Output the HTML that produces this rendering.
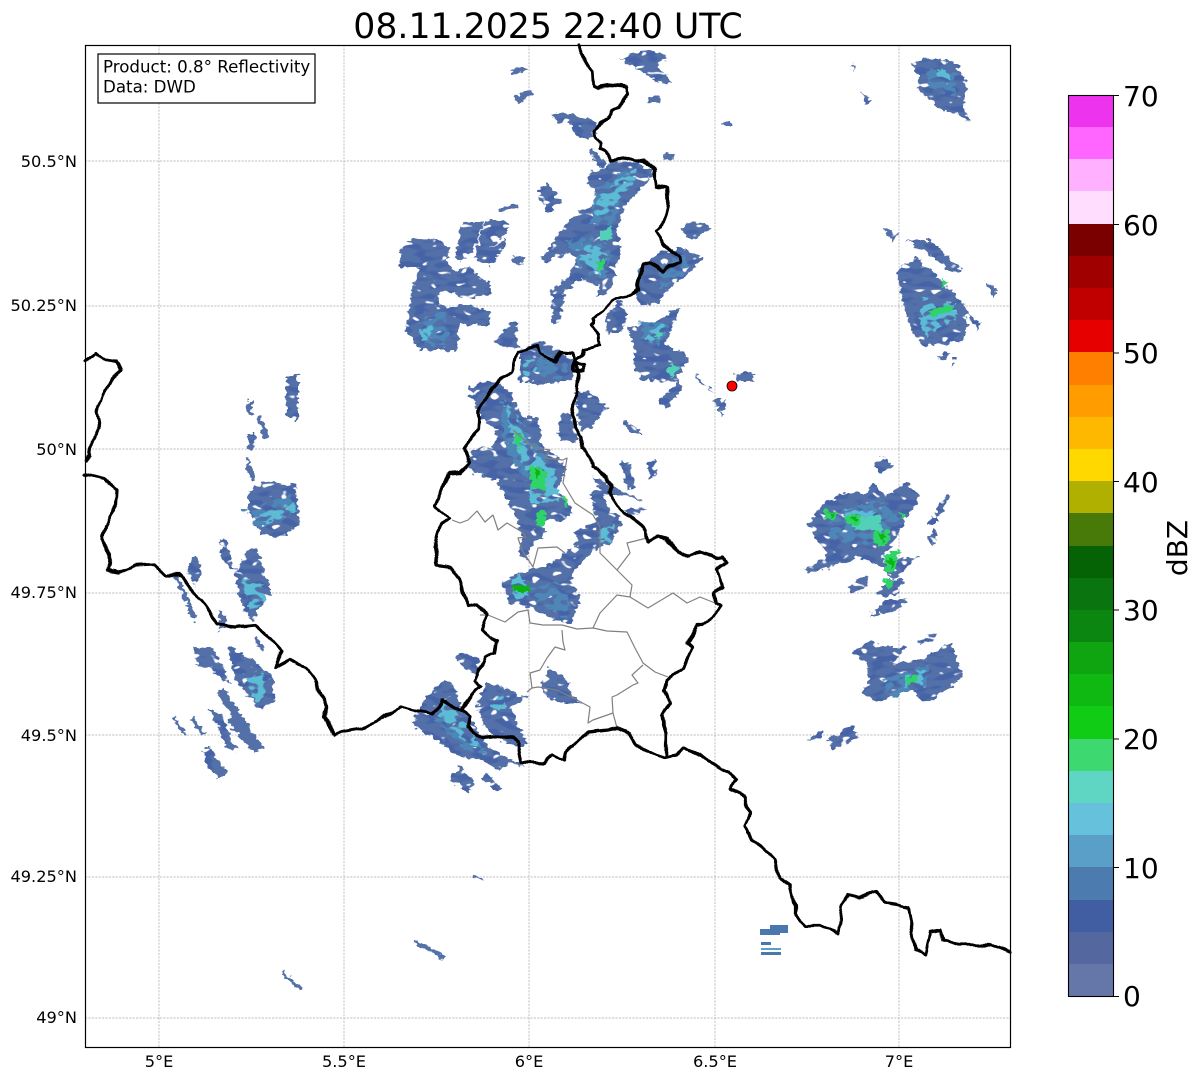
<!DOCTYPE html>
<html><head><meta charset="utf-8"><style>
html,body{margin:0;padding:0;background:#fff;width:1202px;height:1081px;overflow:hidden}
svg{display:block}
text{font-family:"DejaVu Sans","Liberation Sans",sans-serif;fill:#000}
.g{stroke:#aaa;stroke-width:.7;stroke-dasharray:2.2 1.2;fill:none}
.tk{font-size:16.2px}
.cb{font-size:28px}
.b{fill:#5470a8}.m{fill:#4e86b8}.c{fill:#5cbcd6}.t{fill:#52d0b8}.l{fill:#2ed468}.d{fill:#0cb410}
.s{fill:none;stroke:#5370a8}
</style></head><body>
<svg width="1202" height="1081" viewBox="0 0 1202 1081" xmlns="http://www.w3.org/2000/svg">
<defs>
<filter id="j" x="0" y="0" width="1202" height="1081" filterUnits="userSpaceOnUse" color-interpolation-filters="sRGB">
<feTurbulence type="fractalNoise" baseFrequency="0.14 0.22" numOctaves="2" seed="7" result="n"/>
<feDisplacementMap in="SourceGraphic" in2="n" scale="9" xChannelSelector="R" yChannelSelector="G" result="s"/>
<feTurbulence type="fractalNoise" baseFrequency="0.1 0.17" numOctaves="1" seed="21" result="h"/>
<feColorMatrix in="h" type="matrix" values="0 0 0 0 0 0 0 0 0 0 0 0 0 0 0 16 0 0 0 -4.6" result="hm"/>
<feComposite in="s" in2="hm" operator="in" result="p"/>
<feTurbulence type="fractalNoise" baseFrequency="0.07 0.16" numOctaves="1" seed="3" result="v"/>
<feColorMatrix in="v" type="matrix" values="0 0 0 0 .27 0 0 0 0 .39 0 0 0 0 .65 0 10 0 0 -5" result="vm"/>
<feComposite in="vm" in2="p" operator="in" result="dk"/>
<feMerge><feMergeNode in="p"/><feMergeNode in="dk"/></feMerge>
</filter>
<filter id="i" x="0" y="0" width="1202" height="1081" filterUnits="userSpaceOnUse" color-interpolation-filters="sRGB">
<feTurbulence type="fractalNoise" baseFrequency="0.14 0.22" numOctaves="2" seed="7" result="n"/>
<feDisplacementMap in="SourceGraphic" in2="n" scale="9" xChannelSelector="R" yChannelSelector="G" result="s"/>
<feTurbulence type="fractalNoise" baseFrequency="0.11 0.18" numOctaves="1" seed="11" result="h"/>
<feColorMatrix in="h" type="matrix" values="0 0 0 0 0 0 0 0 0 0 0 0 0 0 0 12 0 0 0 -5" result="hm"/>
<feComposite in="s" in2="hm" operator="in"/>
</filter>
<filter id="f" x="0" y="0" width="1202" height="1081" filterUnits="userSpaceOnUse" color-interpolation-filters="sRGB">
<feTurbulence type="fractalNoise" baseFrequency="0.14 0.22" numOctaves="2" seed="7" result="n"/>
<feDisplacementMap in="SourceGraphic" in2="n" scale="9" xChannelSelector="R" yChannelSelector="G"/>
</filter>
<filter id="w" x="0" y="0" width="1202" height="1081" filterUnits="userSpaceOnUse" color-interpolation-filters="sRGB">
<feTurbulence type="fractalNoise" baseFrequency="0.07" numOctaves="1" seed="5" result="n"/>
<feDisplacementMap in="SourceGraphic" in2="n" scale="8" xChannelSelector="R" yChannelSelector="G"/>
</filter>
</defs>
<rect width="1202" height="1081" fill="#fff"/>
<text x="548" y="38" font-size="34.7" text-anchor="middle">08.11.2025 22:40 UTC</text>

<!-- grid -->
<g class="g">
<path d="M159 45V1047M344 45V1047M529 45V1047M715 45V1047M899 45V1047"/>
<path d="M85 161H1010M85 306H1010M85 449H1010M85 593H1010M85 735H1010M85 877H1010M85 1018H1010"/>
</g>

<!-- radar -->
<g filter="url(#j)">
<g class="b">
<path d="M620 60L637 52L655 50L667 57L657 65L672 83L657 82L640 70Z"/>
<path d="M550 115L563 112L597 122L593 138L577 137L573 125L557 122Z"/>
<path d="M590 147L607 163L600 168L590 155Z"/>
<path d="M590 173L613 163L633 160L653 173L640 190L625 205L618 225L620 255L610 290L595 298L600 285L580 280L565 290L560 320L552 325L552 300L550 290L565 280L575 265L570 252L545 262L540 260L555 240L565 225L575 215L595 205L595 190L588 185Z"/>
<path d="M640 267L660 253L680 247L702 257L690 273L667 290L657 303L640 307L635 290Z"/>
<path d="M680 230L693 220L712 228L693 240Z"/>
<path d="M605 317L620 300L627 317L620 333L607 333Z"/>
<path d="M627 327L653 323L680 307L673 327L663 347L633 343Z"/>
<path d="M400 250L410 240L427 237L450 247L447 262L455 270L470 267L490 285L490 295L470 297L440 292L437 305L447 307L470 305L490 312L488 325L460 325L457 350L420 350L405 330L413 287L420 267L400 267Z"/>
<path d="M462 222L483 222L475 250L460 262L455 258Z"/>
<path d="M485 220L505 220L510 228L490 250L505 238L505 248L490 265L475 258Z"/>
<path d="M492 343L515 320L518 350Z"/>
<path d="M537 193L547 183L560 200L550 213Z"/>
<path d="M520 350L540 340L577 363L573 380L547 383L520 383Z"/>
<path d="M468 387L483 383L503 383L523 417L537 417L543 447L557 457L567 467L557 490L573 510L567 520L550 520L540 527L547 533L533 543L527 560L517 553L523 540L517 517L497 483L500 480L487 480L467 467L473 450L493 447L497 430L480 417Z"/>
<path d="M573 532L597 522L613 513L622 523L610 543L593 550L578 567L570 580L580 597L573 623L563 623L527 607L510 603L502 582L520 573L533 570L557 560L567 550L580 543Z"/>
<path d="M575 390L590 393L608 407L593 427L580 430Z"/>
<path d="M558 427L563 412L577 420L577 443L560 440Z"/>
<path d="M590 492L603 490L608 510L620 517L610 530L597 523Z"/>
<path d="M593 477L613 487L643 500L627 497L603 493Z"/>
<path d="M623 510L648 508L630 517Z"/>
<path d="M633 340L660 343L677 350L690 357L677 377L683 387L667 408L658 403L677 382L640 380L633 360Z"/>
<path d="M693 373L715 392L700 383Z"/>
<path d="M712 400L725 400L722 415Z"/>
<path d="M622 423L630 422L643 435L633 435Z"/>
<path d="M735 374L752 372L755 381L738 381Z"/>
<path d="M620 462L628 462L635 485L628 490Z"/>
<path d="M647 462L655 460L657 475L650 478Z"/>
<path d="M455 658L463 653L480 658L475 675L463 667Z"/>
<path d="M412 723L420 707L433 690L445 680L455 687L460 707L470 717L480 737L493 750L528 768L510 763L500 770L483 760L460 757Z"/>
<path d="M450 780L460 767L477 783L468 793Z"/>
<path d="M480 777L487 773L502 788L497 792Z"/>
<path d="M477 707L487 682L503 687L527 698L510 707L517 723L527 743L523 747L507 743L487 730Z"/>
<path d="M540 683L550 668L568 680L570 693L580 702L563 703L547 698Z"/>
<path d="M875 463L885 455L893 467L878 472Z"/>
<path d="M808 525L823 503L847 493L867 493L872 483L887 497L907 482L920 497L900 530L893 543L880 560L920 557L907 567L893 580L883 567L857 557L833 567L807 572L805 568L820 563L827 553L813 533Z"/>
<path d="M848 588L860 577L870 578L868 587L853 593Z"/>
<path d="M877 593L890 580L903 580L897 593L883 598Z"/>
<path d="M870 615L887 600L907 598L890 613Z"/>
<path d="M927 538L935 527L937 540L932 545Z"/>
<path d="M927 523L943 500L950 495L937 523Z"/>
<path d="M852 652L870 640L880 647L908 647L893 663L920 660L950 643L963 677L930 703L920 700L913 690L880 702L862 693L868 680L867 663Z"/>
<path d="M917 642L937 632L937 638L920 645Z"/>
<path d="M807 740L823 730L823 737Z"/>
<path d="M827 740L853 725L857 737L833 750Z"/>
<path d="M912 63L930 58L953 62L968 83L963 107L970 123L957 112L943 112L918 90L920 80Z"/>
<path d="M897 270L917 257L937 277L953 293L967 307L967 333L960 343L923 345L913 333L903 307Z"/>
<path d="M905 240L930 240L962 270L953 273L933 257Z"/>
<path d="M883 228L897 233L893 242Z"/>
<path d="M985 282L997 288L993 298Z"/>
<path d="M937 355L950 353L943 362Z"/>
<path d="M952 357L957 357L953 368Z"/>
<path d="M967 313L980 323L977 330Z"/>
<path d="M860 90L872 102L866 104Z"/>
<path d="M850 65L856 64L854 71Z"/>
<path d="M286 375L298 375L298 420L286 415Z"/>
<path d="M248 433L256 433L254 450L248 450Z"/>
<path d="M248 493L263 482L295 485L300 522L287 535L275 537L260 533L248 510Z"/>
<path d="M220 540L225 538L235 573L248 550L257 547L272 595L260 607L252 623L240 600L235 573L222 560Z"/>
<path d="M192 557L197 557L202 573L195 587L187 572Z"/>
<path d="M218 610L225 613L227 627L220 630Z"/>
<path d="M192 647L212 647L230 682L225 683L212 670L197 663Z"/>
<path d="M228 648L233 648L252 660L273 677L275 700L260 710L235 680Z"/>
<path d="M208 708L220 713L238 752L227 747Z"/>
<path d="M203 750L210 748L227 773L218 780L205 763Z"/>
</g>
</g>
<g filter="url(#f)">
<g class="s">
<path stroke-width="5" d="M512 73L525 68"/>
<path stroke-width="7" d="M516 100L532 92"/>
<path stroke-width="4" d="M250 400V415M248 460L253 482M255 637L263 650"/>
<path stroke-width="5" d="M260 417L266 438"/>
<path stroke-width="4" d="M175 573L195 620M193 718L203 735"/>
<path stroke-width="8" d="M220 690L260 750"/>
<path stroke-width="12" d="M232 718L258 750"/>
<path stroke-width="3" d="M173 717L185 735"/>
<path stroke-width="4" d="M414 941L445 958M281 973L301 988"/>
<path stroke-width="2" d="M474 876L482 880"/>
<path stroke-width="5" d="M723 123L731 123"/>
<path stroke-width="6" d="M648 99L660 100"/>
<path stroke-width="6" d="M664 156L674 157"/>
<path stroke-width="5" d="M500 210L518 205"/>
<path stroke-width="6" d="M514 261L525 259"/>
<path stroke-width="4" d="M890 612L905 600"/>
</g>
</g>
<g filter="url(#i)">
<g class="m">
<path d="M595 190L625 170L642 172L625 195L612 225L590 225Z"/>
<path d="M565 240L590 235L612 250L605 285L580 270Z"/>
<path d="M420 320L445 310L450 345L425 345Z"/>
<path d="M500 400L520 420L550 460L560 500L540 500L505 450Z"/>
<path d="M530 590L555 580L570 600L565 618L540 605Z"/>
<path d="M240 510L290 495L292 515L260 528Z"/>
<path d="M430 715L460 725L490 755L465 750Z"/>
<path d="M830 515L880 500L900 520L870 545L830 540Z"/>
<path d="M880 680L930 665L925 685L890 698Z"/>
<path d="M540 350L570 365L560 380L535 375Z"/>
<path d="M925 70L955 72L955 95L930 90Z"/>
<path d="M660 265L685 255L690 270L660 290Z"/>
<path d="M640 320L670 325L660 345L640 342Z"/>
</g>
<g class="c">
<path d="M600 195L618 180L635 170L640 175L620 195L610 215L595 215Z"/>
<path d="M575 250L595 245L608 255L600 275L585 265Z"/>
<path d="M505 400L515 410L525 440L535 450L540 470L525 470L510 430Z"/>
<path d="M530 450L555 470L560 500L530 505Z"/>
<path d="M510 580L520 575L530 595L515 600Z"/>
<path d="M600 530L615 525L612 540L600 542Z"/>
<path d="M523 362L535 360L537 375L525 377Z"/>
<path d="M252 517L293 502L297 510L270 523Z"/>
<path d="M240 575L262 585L268 600L250 610Z"/>
<path d="M244 675L262 668L268 695L255 702Z"/>
<path d="M442 700L460 715L480 745L468 745L440 715Z"/>
<path d="M845 510L875 512L868 525L850 525Z"/>
<path d="M938 70L950 70L950 83L940 80Z"/>
<path d="M923 293L937 307L957 303L957 317L927 337L920 323Z"/>
<path d="M905 675L925 670L920 685L905 688Z"/>
<path d="M650 330L665 325L660 340L645 342Z"/>
<path d="M420 330L432 325L430 340L422 340Z"/>
<path d="M490 700L505 695L505 710L495 712Z"/>
</g>
</g>
<g filter="url(#f)">
<g class="t">
<path d="M672 362L680 366L672 378L668 372Z"/>
<path d="M600 230L612 225L610 240L600 240Z"/>
<path d="M655 335L665 332L660 340Z"/>
<path d="M884 555L898 552L895 570L885 570Z"/>
<path d="M850 520L880 515L880 530L855 530Z"/>
</g>
<g class="l">
<path d="M516 430L522 437L520 450L515 442Z"/>
<path d="M530 465L548 470L545 490L530 488Z"/>
<path d="M537 515L545 510L545 525L537 527Z"/>
<path d="M562 495L570 500L565 508Z"/>
<path d="M597 262L605 258L600 272Z"/>
<path d="M928 310L955 305L953 310L933 317Z"/>
<path d="M825 510L838 512L835 520L825 518Z"/>
<path d="M846 515L862 515L860 525L846 525Z"/>
<path d="M875 530L890 530L888 545L873 545Z"/>
<path d="M885 555L900 550L895 572L885 572Z"/>
<path d="M882 580L895 582L890 590Z"/>
<path d="M905 677L918 675L918 683L908 685Z"/>
<path d="M898 512L905 513L902 522Z"/>
<path d="M942 278L948 283L943 287Z"/>
</g>
<g class="d">
<path d="M512 585L530 585L530 592L514 592Z"/>
<path d="M828 512L835 512L833 518Z"/>
<path d="M848 518L858 518L856 523Z"/>
<path d="M878 532L886 532L884 542Z"/>
<path d="M888 560L896 558L892 570Z"/>
<path d="M535 470L540 470L538 482Z"/>
</g>
</g>
<!-- bottom rect stripes -->
<g fill="#4a78ae">
<rect x="760" y="929" width="20" height="6"/><rect x="770" y="925" width="18" height="8"/>
<rect x="761" y="942" width="10" height="3"/><rect x="761" y="948" width="20" height="2" fill="#5a9fc8"/><rect x="761" y="952" width="20" height="3"/>
</g>

<!-- grey borders -->
<g fill="none" stroke="#808080" stroke-width="1.2" stroke-linejoin="round">
<path d="M452 520L460 523L468 520L477 511L485 522L493 515L498 530L507 523L522 532L526 537L518 538L522 550L533 567L538 548L557 547L565 553"/>
<path d="M513 430L533 447L550 450L545 458L563 460L567 458L563 483L575 503L593 515L600 527L600 553L617 570L630 553L627 543L647 538L647 543"/>
<path d="M617 570L632 585L630 597L617 595L600 613L593 628"/>
<path d="M630 597L648 608L673 593L687 603L700 597L715 603"/>
<path d="M480 615L488 615L505 622L518 612L528 610L530 623L543 625L562 625L577 629L593 628L607 631L627 632L635 648L643 663L655 672L668 677"/>
<path d="M562 630L563 642L565 650L555 647L547 658L540 670L530 673L532 688L527 692M532 688L538 687L557 690L577 700L590 707L588 723L593 720L613 713L617 728"/>
<path d="M613 713L612 697L617 695L633 685L638 683L632 675L643 665"/>
</g>

<!-- black borders -->
<g filter="url(#w)">
<g fill="none" stroke="#000" stroke-width="3.2" stroke-linejoin="round" stroke-linecap="round">
<path d="M578 45L585 60L592 72L593 85L597 87L610 85L627 87L629 93L624 100L620 108L613 110L608 118L600 125L595 130L597 138L601 143L600 147L606 150L611 161L620 160L632 158L643 160L652 167L655 170L655 180L656 186L667 188L668 200L665 215L660 228L656 232L665 245L678 256L680 262L670 266L663 272L652 264L645 265L640 275L637 290L630 295L612 300L605 310L593 318L594 322L591 325L598 335L599 345L592 348L582 350L583 355L577 360L573 370L583 370L586 365L578 363L577 383L575 400L572 415L577 427L583 437L582 447L590 457L592 468L598 470L607 477L612 485L610 493L615 503L627 515L637 522L647 530L648 542L657 535L665 537L677 550L688 557L702 552L717 558L722 557L725 562L717 570L720 580L722 587L715 593L715 605L720 608L715 615L702 625L697 625L687 643L692 648L683 668L668 680L665 690L670 703L662 717L666 733L666 757L677 755L685 748L700 755L713 763L728 772L735 780L730 790L745 797L750 812L745 825L752 840L770 853L775 860L778 878L790 885L795 905L795 915L805 925L820 925L838 932L842 905L848 895L860 898L875 892L885 903L897 905L908 908L912 930L915 950L925 955L930 932L940 930L943 940L960 945L975 945L990 945L1003 950L1010 953"/>
<path d="M85 475L105 480L117 490L116 505L105 525L103 540L110 555L107 570L120 572L135 566L155 565L165 575L180 575L192 590L205 605L218 625L235 627L255 625L270 637L282 650L275 668L290 660L305 668L315 680L320 695L328 705L325 717L333 735L345 731L362 728L375 722L390 712L400 706L415 710L432 713L442 700L460 710L470 717L468 727L483 737L497 735L515 737L518 743L522 762L543 763L552 755L565 762L567 752L577 742L588 732L607 730L618 728L630 733L637 745L663 757L666 757"/>
<path d="M460 710L473 695L482 687L475 680L485 657L495 653L497 640L482 630L488 615L478 605L468 607L460 580L450 567L438 565L435 547L440 525L450 520L435 505L448 473L460 472L470 462L465 447L477 430L478 412L493 387L512 372L517 352L538 345L540 353L555 360L560 352L573 353L578 363"/>
<path d="M85 362L95 353L105 360L116 362L121 370L112 378L105 392L102 400L96 412L99 428L92 440L90 455L85 460"/>
</g>
</g>

<circle cx="732" cy="386" r="5" fill="#f00" stroke="#000" stroke-width=".8"/>

<!-- annotation -->
<rect x="98" y="54" width="217" height="49" fill="#fff" stroke="#000" stroke-width="1.2"/>
<text x="103" y="72.5" font-size="16.67">Product: 0.8° Reflectivity</text>
<text x="103" y="92.5" font-size="16.67">Data: DWD</text>

<!-- axes -->
<rect x="85.5" y="45.5" width="925" height="1002" fill="none" stroke="#000" stroke-width="1.2"/>

<!-- labels -->
<g class="tk" text-anchor="end">
<text x="77" y="167">50.5°N</text>
<text x="77" y="311">50.25°N</text>
<text x="77" y="455">50°N</text>
<text x="77" y="598">49.75°N</text>
<text x="77" y="741">49.5°N</text>
<text x="77" y="882">49.25°N</text>
<text x="77" y="1023">49°N</text>
</g>
<g class="tk" text-anchor="middle">
<text x="159" y="1067">5°E</text>
<text x="344" y="1067">5.5°E</text>
<text x="529" y="1067">6°E</text>
<text x="715" y="1067">6.5°E</text>
<text x="899" y="1067">7°E</text>
</g>

<!-- colorbar -->
<g shape-rendering="crispEdges">
<rect x="1068" y="95" width="45" height="33" fill="#ee33ee"/>
<rect x="1068" y="127" width="45" height="33" fill="#ff66ff"/>
<rect x="1068" y="159" width="45" height="33" fill="#ffb0ff"/>
<rect x="1068" y="191" width="45" height="33" fill="#ffddff"/>
<rect x="1068" y="224" width="45" height="33" fill="#7a0000"/>
<rect x="1068" y="256" width="45" height="33" fill="#a00000"/>
<rect x="1068" y="288" width="45" height="33" fill="#c00000"/>
<rect x="1068" y="320" width="45" height="33" fill="#e60000"/>
<rect x="1068" y="352" width="45" height="33" fill="#ff8000"/>
<rect x="1068" y="385" width="45" height="33" fill="#ff9c00"/>
<rect x="1068" y="417" width="45" height="33" fill="#ffb800"/>
<rect x="1068" y="449" width="45" height="33" fill="#ffd800"/>
<rect x="1068" y="481" width="45" height="33" fill="#b0b000"/>
<rect x="1068" y="513" width="45" height="33" fill="#487a0a"/>
<rect x="1068" y="546" width="45" height="33" fill="#056205"/>
<rect x="1068" y="578" width="45" height="33" fill="#0a750f"/>
<rect x="1068" y="610" width="45" height="33" fill="#0b8610"/>
<rect x="1068" y="642" width="45" height="33" fill="#0ea510"/>
<rect x="1068" y="674" width="45" height="33" fill="#10b812"/>
<rect x="1068" y="706" width="45" height="33" fill="#10cc14"/>
<rect x="1068" y="739" width="45" height="33" fill="#3dd870"/>
<rect x="1068" y="771" width="45" height="33" fill="#5fd6c4"/>
<rect x="1068" y="803" width="45" height="33" fill="#66c2dc"/>
<rect x="1068" y="835" width="45" height="33" fill="#5a9fc8"/>
<rect x="1068" y="867" width="45" height="33" fill="#4c7bb0"/>
<rect x="1068" y="900" width="45" height="33" fill="#425ea3"/>
<rect x="1068" y="932" width="45" height="33" fill="#54689f"/>
<rect x="1068" y="964" width="45" height="32" fill="#6577a8"/>
</g>
<rect x="1068.5" y="95.5" width="45" height="901" fill="none" stroke="#000" stroke-width="1.1"/>
<path d="M1113 95.5h6M1113 224.5h6M1113 353h6M1113 481.5h6M1113 610h6M1113 739h6M1113 867.5h6M1113 996.5h6" stroke="#000" stroke-width="1.1"/>
<g class="cb">
<text x="1123" y="106">70</text>
<text x="1123" y="235">60</text>
<text x="1123" y="363">50</text>
<text x="1123" y="492">40</text>
<text x="1123" y="620">30</text>
<text x="1123" y="749">20</text>
<text x="1123" y="878">10</text>
<text x="1123" y="1006">0</text>
</g>
<text transform="translate(1187 548) rotate(-90)" font-size="28" text-anchor="middle">dBZ</text>
</svg>
</body></html>
